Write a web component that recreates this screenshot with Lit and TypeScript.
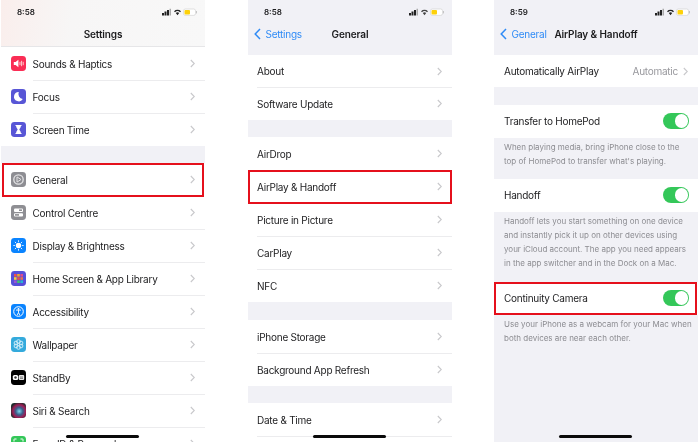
import { LitElement, html, css, svg } from "lit";
import { customElement } from "lit/decorators.js";

type Row = { label: string; icon?: unknown; red?: boolean; value?: string; toggle?: boolean };

const ic = (bg: string, body: unknown) => html`<svg class="icon" viewBox="0 0 15 15" aria-hidden="true"><rect width="15" height="15" rx="3.4" fill="${bg}"/>${body}</svg>`;

const icons = {
  sounds: ic("#fa2d55", svg`<path d="M2.800 6h1.800l2.800-2.200v7.400L4.600 9H2.800z" fill="#fff"/><path d="M9 5.800v3.400M10.600 4.800v5.400M12.200 5.800v3.400" stroke="#fcc" stroke-width="1" fill="none"/>`),
  focus: ic("#5856d6", svg`<path d="M7.800 3a4.700 4.700 0 1 0 4 7A5 5 0 0 1 7.800 3z" fill="#fff"/>`),
  time: ic("#5856d6", svg`<path d="M4.500 3h6v1H9.900c0 1.600-1.200 2.400-1.600 3.500.4 1.100 1.600 1.900 1.600 3.500h.6v1h-6v-1h.6c0-1.600 1.200-2.400 1.600-3.500C6.300 6.400 5.100 5.600 5.100 4h-.6z" fill="#fff"/>`),
  general: ic("#8e8e93", svg`<circle cx="7.500" cy="7.500" r="4.700" fill="none" stroke="#e4e4e6" stroke-width="1.300"/><path d="M6 4.900l4 2.600-4 2.600z" fill="none" stroke="#e4e4e6" stroke-width="1"/>`),
  control: ic("#8e8e93", svg`<rect x="3" y="3.500" width="9" height="3.400" rx="1" fill="#fff"/><rect x="8" y="4.400" width="3" height="1.600" fill="#8e8e93"/><rect x="3" y="8.200" width="9" height="3.400" rx="1" fill="#fff"/><rect x="4" y="9.100" width="4" height="1.600" fill="#8e8e93"/>`),
  display: ic("#0a84ff", svg`<circle cx="7.500" cy="7.500" r="2.700" fill="#fff"/><path d="M7.500 2.400v1.400M7.500 11.200v1.400M2.400 7.500h1.400M11.200 7.500h1.400M3.900 3.900l1 1M10.100 10.100l1 1M3.900 11.100l1-1M10.100 4.900l1-1" stroke="#fff" stroke-width="1"/>`),
  home: ic("#5650d8", svg`<rect x="3" y="3" width="2.600" height="2.600" fill="#f0504a"/><rect x="6.200" y="3" width="2.600" height="2.600" fill="#f5a623"/><rect x="9.400" y="3" width="2.600" height="2.600" fill="#e04a8a"/><rect x="3" y="6.200" width="2.600" height="2.600" fill="#f7d038"/><rect x="6.200" y="6.200" width="2.600" height="2.600" fill="#f0504a"/><rect x="9.400" y="6.200" width="2.600" height="2.600" fill="#e8734a"/><rect x="3" y="9.400" width="2.600" height="2.600" fill="#9b59d0"/><rect x="6.200" y="9.400" width="2.600" height="2.600" fill="#3fc56f"/><rect x="9.400" y="9.400" width="2.600" height="2.600" fill="#25b7d3"/>`),
  access: ic("#0a84ff", svg`<circle cx="7.500" cy="7.500" r="4.800" fill="none" stroke="#fff" stroke-width="1"/><circle cx="7.500" cy="4.900" r=".9" fill="#fff"/><path d="M5 6.100h5M7.500 6.100v2.400M7.500 8.500l-1.200 2.400M7.500 8.500l1.200 2.400" stroke="#fff" stroke-width=".9" fill="none"/>`),
  wallpaper: ic("#34aadc", svg`<g fill="none" stroke="#d8f1fb" stroke-width=".9"><circle cx="7.500" cy="4.600" r="1.900"/><circle cx="7.500" cy="10.400" r="1.900"/><circle cx="5" cy="6.050" r="1.900"/><circle cx="10" cy="6.050" r="1.900"/><circle cx="5" cy="8.950" r="1.900"/><circle cx="10" cy="8.950" r="1.900"/></g>`),
  standby: ic("#000", svg`<rect x="1.800" y="5" width="5.400" height="5" rx="1.600" fill="#fff"/><rect x="7.800" y="5" width="5.400" height="5" rx="1" fill="#e4e4e4"/><circle cx="4.500" cy="7.500" r="1.200" fill="#333"/><path d="M9 7h3M9 8.400h3" stroke="#555" stroke-width=".7"/>`),
  siri: html`<svg class="icon" viewBox="0 0 15 15" aria-hidden="true"><defs><radialGradient id="sr" cx=".55" cy=".55" r=".6"><stop offset="0" stop-color="#7fd6ee"/><stop offset=".4" stop-color="#3a5f8c"/><stop offset=".72" stop-color="#a01c54"/><stop offset="1" stop-color="#1c2a2a"/></radialGradient></defs><rect width="15" height="15" rx="3.400" fill="url(#sr)"/></svg>`,
  face: ic("#34c759", svg`<path d="M3 5.500V3.500A.5.500 0 0 1 3.500 3h2M9.500 3h2a.5.500 0 0 1 .5.500v2M12 9.500v2a.5.500 0 0 1-.5.500h-2M5.500 12h-2a.5.500 0 0 1-.5-.5v-2" stroke="#fff" stroke-width="1" fill="none"/>`),
};

@customElement("app-root")
export class AppRoot extends LitElement {
  static styles = css`
    :host { display: flex; width: 700px; height: 442px; padding-left: 1px; box-sizing: border-box; overflow: hidden; background: #fff;
      font-family: Inter, "Liberation Sans", sans-serif; color: #1c1c1e; font-size: 10px; letter-spacing: -0.25px; }
    .panel { position: relative; flex: none; width: 204px; height: 442px; background: #f1f1f6; overflow: hidden; filter: blur(0.35px); }
    .p2 { margin-left: 43px; }
    .p3 { margin-left: 42px; }
    .status { height: 24px; display: flex; align-items: center; justify-content: space-between; padding: 0 8px 0 16px; font-size: 8px; font-weight: 600; letter-spacing: 0; box-sizing: border-box; }
    .status svg { display: block; }
    .nav { height: 20px; display: flex; align-items: center; justify-content: center; position: relative; font-weight: 600; letter-spacing: -0.12px; }
    .head { height: 55px; }
    .p1 .head { height: 47px; background: linear-gradient(100deg, #faeeec 0, #f7f6f6 35%, #f8f8f8 100%); border-bottom: 1px solid #e6e6e8; box-sizing: border-box; }
    .back { position: absolute; left: 6px; top: 0; bottom: 0; display: flex; align-items: center; gap: 4.500px; color: #2f8bf6; font-weight: 400; letter-spacing: -0.25px; }
    .group { background: #fff; }
    .row { position: relative; display: flex; align-items: center; height: 33px; box-sizing: border-box; padding: 0 10px 0 10px; }
    .tight .row:first-child { height: 32px; }
    .p2 .row { padding-left: 9px; }
    .row.marked::after { content: ""; position: absolute; inset: 0 0 -0.500px 0; border: 2px solid #e5101c; z-index: 1; pointer-events: none; }
    .p1 .row.marked::after { inset: 0 1px -1px 1px; }
    .p3 .row.marked::after { inset: 0 1px 0 0; }
    .row + .row::before { content: ""; position: absolute; top: -0.500px; left: 9px; right: 0; height: 1px; background: #ececee; }
    .withicon .row + .row::before { left: 32px; }
    .row.marked + .row::before { display: none; }
    .icon { width: 15px; height: 15px; margin-right: 6.500px; flex: none; }
    .label { flex: 1; white-space: nowrap; }
    .value { color: #98989d; margin-right: 5px; }
    .chev { flex: none; display: block; }
    .gap { height: 17px; }
    .gap.wide { height: 18px; }
    .gap.mid { height: 17.500px; }
    .foot { color: #8c8c91; font-size: 8px; letter-spacing: 0; line-height: 14px; padding: 2px 8px 11px 10px; white-space: nowrap; }
    .foot.long { padding: 2px 8px 12px 10px; }
    .toggle { width: 26px; height: 15.500px; border-radius: 8px; background: #34c759; position: relative; flex: none; margin-right: -1px; }
    .toggle::after { content: ""; position: absolute; right: 1px; top: 1px; width: 13.500px; height: 13.500px; border-radius: 50%; background: #fff; }
    .bar { position: absolute; left: 65px; bottom: 4px; width: 73px; height: 3px; border-radius: 2px; background: #0a0a0a; z-index: 2; }
  `;

  private chevron() {
    return html`<svg class="chev" width="5" height="9" viewBox="0 0 5 9" aria-hidden="true"><path d="M.8 1l3.500 3.500L.8 8" fill="none" stroke="#c8c8cb" stroke-width="1.100"/></svg>`;
  }

  private statusBar(time: string, wifi = "#222") {
    return html`<div class="status"><span>${time}</span>
      <svg width="35" height="9" viewBox="0 0 35 9" aria-hidden="true">
        <path d="M0 5h2v2.500H0zM2.500 3.500h2v4h-2zM5 2h2v5.500H5z" fill="#222"/><path d="M7.500 .8h1.500v6.700H7.500z" fill="#aaa"/>
        <path d="M12 3.200a5 5 0 0 1 7 0l-1 1a3.600 3.600 0 0 0-5 0zM13.800 5a2.500 2.500 0 0 1 3.400 0l-1.700 2.200z" fill="${wifi}"/>
        <rect x="21.500" y="1" width="12" height="6.400" rx="1.800" fill="#fff" stroke="#ccc" stroke-width=".6"/>
        <rect x="22.500" y="2" width="5.500" height="4.400" rx="1" fill="#fdd10a"/>
        <rect x="34" y="3" width=".8" height="2.400" fill="#bbb"/>
      </svg></div>`;
  }

  private rows(list: Row[], cls = "") {
    return html`<div class="group ${cls}">${list.map(r => html`
      <div class="row ${r.red ? "marked" : ""}">
        ${r.icon ?? ""}<span class="label">${r.label}</span>
        ${r.value ? html`<span class="value">${r.value}</span>` : ""}
        ${r.toggle ? html`<span class="toggle"></span>` : this.chevron()}
      </div>`)}</div>`;
  }

  private backBtn(label: string) {
    return html`<span class="back"><svg width="7" height="12" viewBox="0 0 7 12" aria-hidden="true"><path d="M6 1L1.200 6 6 11" fill="none" stroke="#2f8bf6" stroke-width="1.500"/></svg>${label}</span>`;
  }

  render() {
    return html`
      <section class="panel p1">
        <div class="head">${this.statusBar("8:58")}<div class="nav">Settings</div></div>
        ${this.rows([
          { label: "Sounds & Haptics", icon: icons.sounds },
          { label: "Focus", icon: icons.focus },
          { label: "Screen Time", icon: icons.time },
        ], "withicon")}
        <div class="gap"></div>
        ${this.rows([
          { label: "General", icon: icons.general, red: true },
          { label: "Control Centre", icon: icons.control },
          { label: "Display & Brightness", icon: icons.display },
          { label: "Home Screen & App Library", icon: icons.home },
          { label: "Accessibility", icon: icons.access },
          { label: "Wallpaper", icon: icons.wallpaper },
          { label: "StandBy", icon: icons.standby },
          { label: "Siri & Search", icon: icons.siri },
          { label: "Face ID & Passcode", icon: icons.face },
        ], "withicon")}
        <div class="bar"></div>
      </section>
      <section class="panel p2">
        <div class="head">${this.statusBar("8:58", "#444")}<div class="nav">${this.backBtn("Settings")}General</div></div>
        ${this.rows([{ label: "About" }, { label: "Software Update" }], "tight")}
        <div class="gap"></div>
        ${this.rows([{ label: "AirDrop" }, { label: "AirPlay & Handoff", red: true }, { label: "Picture in Picture" }, { label: "CarPlay" }, { label: "NFC" }])}
        <div class="gap wide"></div>
        ${this.rows([{ label: "iPhone Storage" }, { label: "Background App Refresh" }])}
        <div class="gap"></div>
        ${this.rows([{ label: "Date & Time" }, { label: "" }])}
        <div class="bar"></div>
      </section>
      <section class="panel p3">
        <div class="head">${this.statusBar("8:59")}<div class="nav">${this.backBtn("General")}AirPlay &amp; Handoff</div></div>
        ${this.rows([{ label: "Automatically AirPlay", value: "Automatic" }], "tight")}
        <div class="gap mid"></div>
        ${this.rows([{ label: "Transfer to HomePod", toggle: true }])}
        <div class="foot">When playing media, bring iPhone close to the<br>top of HomePod to transfer what's playing.</div>
        ${this.rows([{ label: "Handoff", toggle: true }])}
        <div class="foot long">Handoff lets you start something on one device<br>and instantly pick it up on other devices using<br>your iCloud account. The app you need appears<br>in the app switcher and in the Dock on a Mac.</div>
        ${this.rows([{ label: "Continuity Camera", toggle: true, red: true }])}
        <div class="foot">Use your iPhone as a webcam for your Mac when<br>both devices are near each other.</div>
        <div class="bar"></div>
      </section>
    `;
  }
}
